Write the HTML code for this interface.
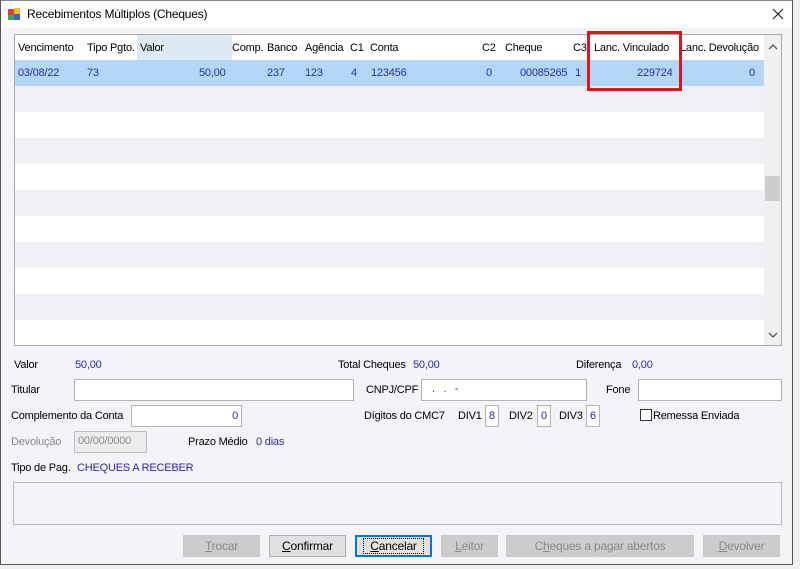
<!DOCTYPE html>
<html><head><meta charset="utf-8"><style>
*{box-sizing:border-box;margin:0;padding:0}
body{width:800px;height:569px;background:#f0f0f0;font-family:"Liberation Sans",sans-serif;font-size:11px;letter-spacing:-0.2px;color:#000;position:relative;overflow:hidden}
.abs{position:absolute}
.win{left:0;top:0;width:793px;height:565px;background:#f3f3f8;border:1px solid #555;border-top:1px solid #888}
.title{left:1px;top:1px;width:791px;height:27px;background:#fff}
.grid{left:14px;top:34px;width:768px;height:312px;border:1px solid #aaa;background:#fff;overflow:hidden}
.row{position:absolute;left:0;width:749px;height:26px}
.c{position:absolute;top:0;line-height:26px;white-space:nowrap}
.blue{color:#2b2ba8}
.lbl{position:absolute;white-space:nowrap;line-height:14px}
.inp{position:absolute;background:#fff;border:1px solid #b4b4b4;height:22px}
.btn{position:absolute;top:535px;height:22px;border:1px solid #c8c8c8;background:#ccc;color:#8a8a8a;text-align:center;line-height:20px;font-size:12px}
</style></head><body>
<div class="abs win"></div>
<div class="abs title"></div>
<div class="abs" style="left:8px;top:9px;width:6px;height:6px;background:#d43"></div>
<div class="abs" style="left:14px;top:8px;width:6px;height:6px;background:#f0c030"></div>
<div class="abs" style="left:8px;top:15px;width:6px;height:5px;background:#3a6"></div>
<div class="abs" style="left:14px;top:14px;width:6px;height:6px;background:#36c"></div>
<div class="lbl" style="left:27px;top:7px;font-size:12px">Recebimentos Múltiplos (Cheques)</div>
<svg class="abs" style="left:772px;top:8px" width="12" height="12"><path d="M1 1L11 11M11 1L1 11" stroke="#222" stroke-width="1.2"/></svg>

<div class="abs grid">
 <div class="row" style="top:0;height:25px;background:#fff">
  <div class="c" style="left:122px;width:95px;height:25px;background:#dde9f5"></div>
  <div class="c" style="left:3px">Vencimento</div>
  <div class="c" style="left:72px">Tipo Pgto.</div>
  <div class="c" style="left:125px">Valor</div>
  <div class="c" style="left:217px">Comp.</div>
  <div class="c" style="left:252px">Banco</div>
  <div class="c" style="left:290px">Agência</div>
  <div class="c" style="left:335px">C1</div>
  <div class="c" style="left:355px">Conta</div>
  <div class="c" style="left:467px">C2</div>
  <div class="c" style="left:490px">Cheque</div>
  <div class="c" style="left:558px">C3</div>
  <div class="c" style="left:579px">Lanc. Vinculado</div>
  <div class="c" style="left:665px">Lanc. Devolução</div>
 </div>
 <div class="row blue" style="top:25px;background:#b3d7f7">
  <div class="c" style="left:3px">03/08/22</div>
  <div class="c" style="left:72px">73</div>
  <div class="c" style="left:184px">50,00</div>
  <div class="c" style="left:252px">237</div>
  <div class="c" style="left:290px">123</div>
  <div class="c" style="left:336px">4</div>
  <div class="c" style="left:356px">123456</div>
  <div class="c" style="left:471px">0</div>
  <div class="c" style="left:505px">00085265</div>
  <div class="c" style="left:560px">1</div>
  <div class="c" style="left:622px">229724</div>
  <div class="c" style="left:734px">0</div>
 </div>
 <div class="row" style="top:51px;background:#f0f0f5"></div>
 <div class="row" style="top:103px;background:#f0f0f5"></div>
 <div class="row" style="top:155px;background:#f0f0f5"></div>
 <div class="row" style="top:207px;background:#f0f0f5"></div>
 <div class="row" style="top:259px;background:#f0f0f5"></div>
 <div class="abs" style="left:749px;top:0;width:17px;height:312px;background:#f0f0f0"></div>
 <div class="abs" style="left:750px;top:141px;width:15px;height:25px;background:#cdcdcd"></div>
 <svg class="abs" style="left:753px;top:8px" width="10" height="8"><path d="M1 6L5 2L9 6" stroke="#555" stroke-width="1.3" fill="none"/></svg>
 <svg class="abs" style="left:753px;top:296px" width="10" height="8"><path d="M1 2L5 6L9 2" stroke="#555" stroke-width="1.3" fill="none"/></svg>
</div>
<div class="abs" style="left:587px;top:31px;width:95px;height:60px;border:3px solid #e0141e"></div>

<div class="lbl" style="left:14px;top:358px">Valor</div>
<div class="lbl blue" style="left:75px;top:358px">50,00</div>
<div class="lbl" style="left:338px;top:358px">Total Cheques</div>
<div class="lbl blue" style="left:413px;top:358px">50,00</div>
<div class="lbl" style="left:576px;top:358px">Diferença</div>
<div class="lbl blue" style="left:632px;top:358px">0,00</div>

<div class="lbl" style="left:11px;top:383px">Titular</div>
<div class="inp" style="left:74px;top:379px;width:280px"></div>
<div class="lbl" style="left:366px;top:383px">CNPJ/CPF</div>
<div class="inp" style="left:421px;top:379px;width:166px"><span class="blue" style="position:absolute;left:10px;top:3px">.&nbsp;&nbsp;&nbsp;.&nbsp;&nbsp;&nbsp;-</span></div>
<div class="lbl" style="left:606px;top:383px">Fone</div>
<div class="inp" style="left:638px;top:379px;width:144px"></div>

<div class="lbl" style="left:11px;top:409px">Complemento da Conta</div>
<div class="inp" style="left:131px;top:405px;width:111px"><span class="blue" style="position:absolute;right:3px;top:4px">0</span></div>
<div class="lbl" style="left:364px;top:409px">Dígitos do CMC7</div>
<div class="lbl" style="left:458px;top:409px">DIV1</div>
<div class="inp" style="left:485px;top:405px;width:14px"><span class="blue" style="position:absolute;left:3px;top:4px">8</span></div>
<div class="lbl" style="left:509px;top:409px">DIV2</div>
<div class="inp" style="left:537px;top:405px;width:14px"><span class="blue" style="position:absolute;left:3px;top:4px">0</span></div>
<div class="lbl" style="left:559px;top:409px">DIV3</div>
<div class="inp" style="left:586px;top:405px;width:14px"><span class="blue" style="position:absolute;left:3px;top:4px">6</span></div>
<div class="abs" style="left:640px;top:409px;width:12px;height:12px;border:1px solid #333;background:#fff"></div>
<div class="lbl" style="left:653px;top:409px">Remessa Enviada</div>

<div class="lbl" style="left:11px;top:435px;color:#8a8a8a">Devolução</div>
<div class="inp" style="left:74px;top:431px;width:73px;background:#ececec;border-color:#bbb"><span style="position:absolute;left:3px;top:3px;color:#888">00/00/0000</span></div>
<div class="lbl" style="left:188px;top:435px">Prazo Médio</div>
<div class="lbl blue" style="left:256px;top:435px">0 dias</div>

<div class="lbl" style="left:11px;top:461px">Tipo de Pag.</div>
<div class="lbl blue" style="left:77px;top:461px">CHEQUES A RECEBER</div>

<div class="abs" style="left:13px;top:482px;width:769px;height:43px;border:1px solid #b8b8b8;background:#f3f3f8"></div>

<div class="btn" style="left:183px;width:77px"><u>T</u>rocar</div>
<div class="btn" style="left:269px;width:77px;background:#e1e1e1;border-color:#adadad;color:#000"><u>C</u>onfirmar</div>
<div class="btn" style="left:355px;width:77px;background:#e1e1e1;border:2px solid #0078d7;color:#000;line-height:18px"><span style="border:1px dotted #000;padding:0 6px"><u>C</u>ancelar</span></div>
<div class="btn" style="left:441px;width:57px"><u>L</u>eitor</div>
<div class="btn" style="left:506px;width:188px">C<u>h</u>eques a pagar abertos</div>
<div class="btn" style="left:703px;width:77px"><u>D</u>evolver</div>
</body></html>
